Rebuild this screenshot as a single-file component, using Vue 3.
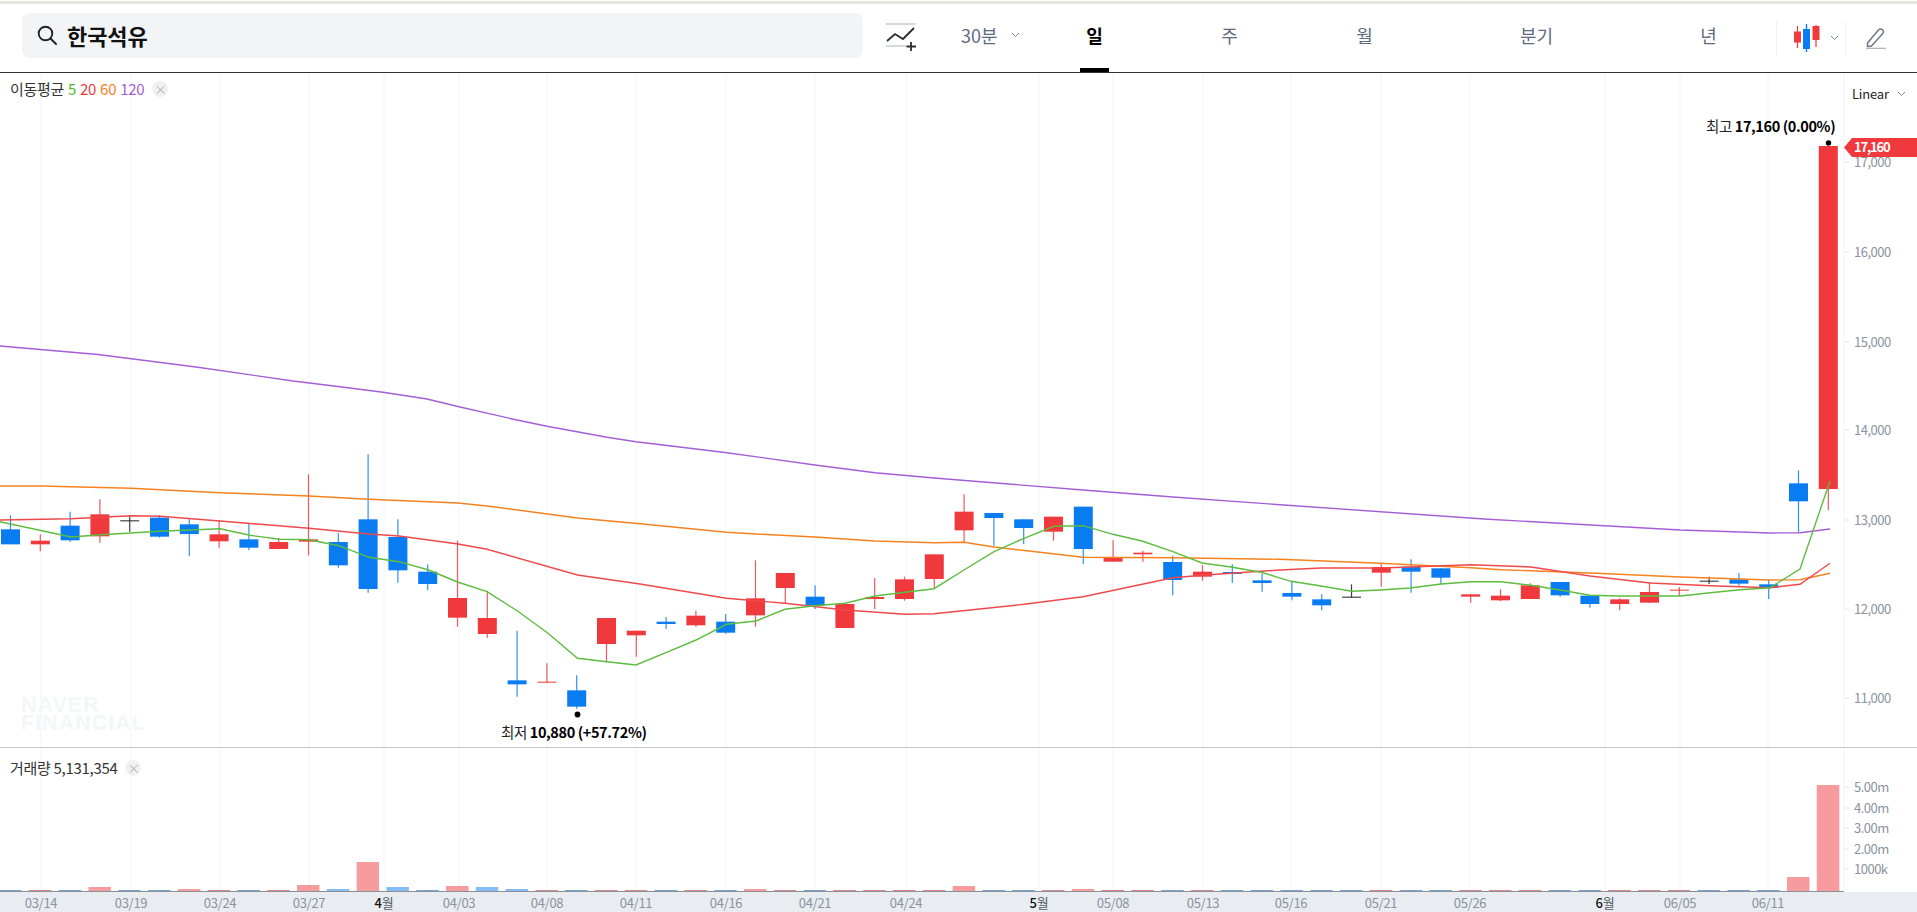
<script setup>
import { computed } from 'vue'

const tabs = [
  { label: '일', active: true },
  { label: '주' },
  { label: '월' },
  { label: '분기', wide: true },
  { label: '년' },
]

// chart is drawn in page coordinates, wick/body values come off a 3x crop starting at y=440
const toY = (v) => 440 + v / 3
const firstX = 10.5
const stepX = 29.8
const barW = 19

const rawCandles = [
  ['b', 226, 268, 313, 313], ['r', 283, 302, 313, 334], ['b', 215, 257, 301, 305], ['r', 178, 223, 289, 308],
  ['k', 228, 241, 244, 275], ['b', 226, 233, 290, 293], ['b', 238, 253, 282, 349], ['r', 241, 283, 304, 323],
  ['b', 250, 298, 323, 331], ['r', 295, 306, 327, 328], ['r', 103, 298, 305, 346], ['b', 280, 306, 376, 383],
  ['b', 43, 238, 447, 458], ['b', 238, 291, 391, 428], ['b', 373, 395, 432, 451], ['r', 302, 474, 533, 560],
  ['r', 452, 534, 582, 593], ['b', 572, 721, 733, 770], ['r', 670, 725, 728, 728], ['b', 706, 751, 800, 806],
  ['r', 534, 534, 612, 667], ['r', 572, 572, 586, 650], ['b', 531, 545, 552, 567], ['r', 512, 527, 556, 560],
  ['b', 522, 545, 578, 582], ['r', 361, 475, 526, 560], ['r', 399, 399, 444, 490], ['b', 436, 470, 497, 507],
  ['r', 492, 492, 564, 564], ['r', 414, 471, 477, 507], ['r', 410, 418, 477, 482], ['r', 343, 343, 417, 447],
  ['r', 163, 215, 271, 306], ['b', 219, 219, 234, 317], ['b', 238, 238, 264, 312], ['r', 230, 230, 275, 302],
  ['b', 200, 200, 327, 372], ['r', 301, 353, 365, 365], ['r', 332, 338, 343, 365], ['b', 347, 366, 420, 466],
  ['r', 376, 395, 410, 422], ['b', 373, 396, 402, 429], ['b', 402, 421, 429, 455], ['b', 425, 459, 470, 481],
  ['b', 463, 478, 496, 511], ['k', 433, 470, 473, 473], ['r', 372, 381, 398, 440], ['b', 358, 380, 395, 458],
  ['b', 385, 385, 413, 432], ['r', 461, 463, 470, 488], ['r', 448, 467, 481, 483], ['r', 430, 436, 477, 478],
  ['b', 425, 426, 466, 470], ['b', 465, 467, 492, 503], ['r', 475, 478, 492, 511], ['r', 427, 456, 488, 489],
  ['r', 441, 449, 452, 468], ['k', 410, 422, 425, 432], ['b', 399, 418, 431, 437], ['b', 418, 433, 443, 477],
  ['b', 91, 130, 184, 278], ['r', -882, -882, 147, 211],
]

const candles = rawCandles.map(([color, high, top, bottom, low], i) => ({
  color,
  x: firstX + i * stepX,
  high: toY(high),
  top: toY(top),
  height: Math.max((bottom - top) / 3, 1),
  low: toY(low),
}))

const volumeTops = {
  3: 887, 6: 889, 10: 885, 11: 889, 12: 862, 13: 887, 15: 886, 16: 887, 17: 889,
  25: 889, 32: 886, 36: 889, 60: 877, 61: 785,
}
// a few volume bars don't take the colour of their candle
const redVolume = [6, 12, 36, 60]
const blueVolume = [16]

const volumes = computed(() =>
  candles.map((c, i) => {
    const top = volumeTops[i]
    const big = top !== undefined
    const isRed = !blueVolume.includes(i) && (c.color === 'r' || redVolume.includes(i))
    const y = big ? top : 890
    return { x: c.x - 11.5, y, h: 891 - y, color: isRed ? '#c9555a' : '#3f7fc4', op: big ? 0 : 0.7, bigColor: isRed ? '#f03a3e' : '#0a7cf2', big }
  }).map((v) => (v.big ? { ...v, color: v.bigColor, op: 0.5 } : v))
)

const lines = [
  {
    color: '#a45fd6',
    pts: [[0, 346], [98, 354.5], [196, 367], [293, 381], [340, 386.7], [383, 392.3], [427, 399], [459, 406.7], [517, 420], [547, 426.3], [607, 437.3], [636, 441.7], [727, 452.7], [815, 465], [875, 472.7], [934, 478], [1083, 490], [1173, 497], [1280, 504.7], [1484, 519], [1680, 530], [1770, 533], [1800, 532.7], [1830, 529]],
  },
  {
    color: '#f5821f',
    pts: [[0, 486], [41, 486], [131, 488.3], [220, 492.7], [309, 496], [369, 499.3], [458, 503], [487, 506], [577.5, 518], [640, 523.7], [726.5, 532.3], [756, 534], [815, 537], [875, 541], [934, 542.7], [964, 542.3], [994, 547], [1083, 557.3], [1173, 557.7], [1280, 559.3], [1380, 563.3], [1471, 567.7], [1501, 569.7], [1590, 573], [1681, 577], [1770, 580], [1800, 579.7], [1830, 573.3]],
  },
  {
    color: '#f0494c',
    pts: [[0, 520], [71, 518.7], [131, 515.7], [160, 516.3], [220, 521], [309, 528.3], [369, 534], [399, 536], [458, 544], [487, 549.3], [577.5, 575], [640, 584], [726.5, 598.3], [785, 603.3], [845, 610], [905, 614.3], [934, 613.7], [1024, 604.3], [1083, 596.7], [1173, 577.7], [1202, 575.3], [1280, 570], [1321, 568], [1380, 568], [1410, 567], [1471, 564.7], [1531, 567], [1590, 576], [1650, 583], [1710, 585.7], [1770, 587.7], [1800, 584.3], [1830, 563.3]],
  },
  {
    color: '#5dbd3f',
    pts: [[0, 521.7], [71, 537], [101, 534.7], [160, 531.3], [220, 528.7], [250, 535.3], [280, 539.3], [309, 539.7], [339, 545.7], [369, 557.3], [399, 561.7], [428.6, 570], [457.6, 582], [487, 591.7], [517.5, 611], [548, 633.3], [577.5, 658.3], [607, 661.7], [636, 665], [666.5, 652.3], [696, 640], [726.5, 624.3], [756, 621], [785, 609.3], [815, 605.7], [845, 603.3], [875, 596], [905, 592.3], [934, 588.7], [964, 570], [994, 551.7], [1024, 538.3], [1054, 526.3], [1083, 525.7], [1113, 534.3], [1142, 541], [1173, 551.7], [1202, 563], [1231, 567], [1261, 572.3], [1291, 581.3], [1321, 586], [1352, 591.3], [1380, 590], [1410, 588], [1441, 584], [1471, 581.7], [1501, 581.7], [1531, 585.3], [1560, 590], [1590, 595.3], [1620, 596], [1650, 596], [1681, 596], [1710, 592.7], [1740, 589.7], [1770, 587.7], [1800, 569], [1830, 481]],
  },
].map((l) => ({ color: l.color, points: l.pts.map((p) => p.join(',')).join(' ') }))

const dates = [
  { x: 41, t: '03/14' }, { x: 131, t: '03/19' }, { x: 220, t: '03/24' }, { x: 309, t: '03/27' },
  { x: 384, n: '4' }, { x: 459, t: '04/03' }, { x: 547, t: '04/08' }, { x: 636, t: '04/11' },
  { x: 726, t: '04/16' }, { x: 815, t: '04/21' }, { x: 906, t: '04/24' }, { x: 1039, n: '5' },
  { x: 1113, t: '05/08' }, { x: 1203, t: '05/13' }, { x: 1291, t: '05/16' }, { x: 1381, t: '05/21' },
  { x: 1470, t: '05/26' }, { x: 1605, n: '6' }, { x: 1680, t: '06/05' }, { x: 1768, t: '06/11' },
]

const priceTicks = [
  { y: 162, t: '17,000' }, { y: 252, t: '16,000' }, { y: 342, t: '15,000' }, { y: 430, t: '14,000' },
  { y: 520, t: '13,000' }, { y: 609, t: '12,000' }, { y: 698, t: '11,000' },
]
const volumeTicks = [
  { y: 787, t: '5.00m' }, { y: 808, t: '4.00m' }, { y: 828, t: '3.00m' }, { y: 849, t: '2.00m' }, { y: 869, t: '1000k' },
]
const colorOf = { r: '#f0393d', b: '#0a7cf2', k: '#222222' }
</script>

<template>
  <div class="page">
    <div class="top-line"></div>
    <header class="toolbar">
      <div class="search">
        <svg class="search-icon" width="20" height="20" viewBox="0 0 20 20">
          <circle cx="8.5" cy="8.5" r="6.8" fill="none" stroke="#222" stroke-width="1.9" />
          <path d="M13.5 13.5 L19 19" stroke="#222" stroke-width="1.9" stroke-linecap="round" />
        </svg>
        <span class="search-name">한국석유</span>
      </div>
      <button class="icon-btn indicator-btn">
        <svg width="30" height="28" viewBox="0 0 30 28">
          <path d="M0 1 H30 M0 23 H20" stroke="#d5d8de" stroke-width="2" />
          <path d="M1 18 L9 11 L17 16 L28 5" fill="none" stroke="#2c2c2c" stroke-width="1.8" />
          <path d="M25 19 V28 M20.5 23.5 H30" stroke="#2c2c2c" stroke-width="1.8" />
        </svg>
      </button>
      <div class="interval">
        <span>30분</span>
        <svg class="chev" width="9" height="6" viewBox="0 0 9 6"><path d="M1 1 L4.5 4.5 L8 1" fill="none" stroke="#7b8494" stroke-width="1" /></svg>
      </div>
      <nav class="tabs">
        <a v-for="tab in tabs" :key="tab.label" class="tab" :class="{ active: tab.active, wide: tab.wide }">
          <span class="tab-label">{{ tab.label }}</span>
        </a>
      </nav>
      <div class="tool candle-tool">
        <svg width="27" height="28" viewBox="0 0 27 28">
          <path d="M3.5 2 V24 M22 1 V23" stroke="#f0393d" stroke-width="1.2" />
          <rect x="0" y="7.5" width="7" height="11" fill="#f0393d" />
          <rect x="18.5" y="2" width="7" height="14" fill="#f0393d" />
          <path d="M12.5 0 V28" stroke="#0a7cf2" stroke-width="1.4" />
          <rect x="9" y="5" width="7" height="20" fill="#0a7cf2" />
        </svg>
        <svg class="chev" width="9" height="6" viewBox="0 0 9 6"><path d="M1 1 L4.5 4.5 L8 1" fill="none" stroke="#7b8494" stroke-width="1" /></svg>
      </div>
      <div class="tool pencil-tool">
        <svg width="20" height="21" viewBox="0 0 20 21">
          <path d="M1.5 15 L12.5 2 Q14.5 0.3 16.5 1.8 Q18.3 3.6 16.8 5.6 L5.5 18 L1.5 18.5 Z" fill="none" stroke="#6f7683" stroke-width="1.5" stroke-linejoin="round" />
          <path d="M0 20.3 H20" stroke="#a9afb9" stroke-width="1.2" />
        </svg>
      </div>
    </header>

    <main class="chart">
      <svg class="plot" width="1917" height="839" viewBox="0 73 1917 839">
        <rect x="0" y="892" width="1917" height="20" fill="#e9ecf1" />

        <line v-for="d in dates" :key="'g' + d.x" :x1="d.x" :x2="d.x" y1="73" y2="891" stroke="#f3f4f7" />
        <line x1="1844" x2="1844" y1="73" y2="891" stroke="#f0f1f4" />
        <line x1="0" x2="1917" y1="747.5" y2="747.5" stroke="#c6c7c9" />

        <text class="watermark" x="21" y="711.5">NAVER</text>
        <text class="watermark" x="21" y="729.5">FINANCIAL</text>

        <g v-for="(c, i) in candles" :key="i">
          <line :x1="c.x" :x2="c.x" :y1="c.high" :y2="c.low" :stroke="colorOf[c.color]" stroke-width="1.2" stroke-opacity="0.85" />
          <rect :x="c.x - barW / 2" :y="c.top" :width="barW" :height="c.height" :fill="colorOf[c.color]" />
        </g>

        <polyline v-for="l in lines" :key="l.color" :points="l.points" fill="none" :stroke="l.color" stroke-width="1.4" />

        <rect v-for="(v, i) in volumes" :key="'v' + i" :x="v.x" :y="v.y" width="22.5" :height="v.h" :fill="v.color" :fill-opacity="v.op" />
        <line x1="0" x2="1844" y1="891.5" y2="891.5" stroke="#8d9096" />

        <circle cx="1828.5" cy="143" r="2.7" fill="#000" />
        <circle cx="577.5" cy="714.5" r="2.9" fill="#000" />
        <text class="note" x="1706" y="131.5">최고 <tspan class="note-bold">17,160 (0.00%)</tspan></text>
        <text class="note" x="501" y="737.5">최저 <tspan class="note-bold">10,880 (+57.72%)</tspan></text>

        <g v-for="t in priceTicks" :key="t.t">
          <line x1="1845" x2="1849" :y1="t.y" :y2="t.y" stroke="#e3e5e9" />
          <text class="tick" x="1854" :y="t.y + 4.5">{{ t.t }}</text>
        </g>
        <polygon points="1844,147.5 1852,138 1917,138 1917,157 1852,157" fill="#f0393d" />
        <text class="tick price-tag" x="1854" y="151.5">17,160</text>

        <g v-for="t in volumeTicks" :key="t.t">
          <line x1="1845" x2="1849" :y1="t.y" :y2="t.y" stroke="#e3e5e9" />
          <text class="tick" x="1854" :y="t.y + 4.5">{{ t.t }}</text>
        </g>

        <g v-for="d in dates" :key="'d' + d.x">
          <text v-if="d.t" class="date" :x="d.x" y="907.5">{{ d.t }}</text>
          <text v-else class="date month" :x="d.x" y="907.5"><tspan class="month-num">{{ d.n }}</tspan>월</text>
        </g>
      </svg>

      <div class="legend ma-legend">
        <span>이동평균</span>
        <span class="ma5">5</span>
        <span class="ma20">20</span>
        <span class="ma60">60</span>
        <span class="ma120">120</span>
        <i class="close">×</i>
      </div>
      <div class="legend vol-legend">
        <span>거래량 5,131,354</span>
        <i class="close">×</i>
      </div>
      <div class="scale-mode">
        <span>Linear</span>
        <svg class="chev" width="9" height="6" viewBox="0 0 9 6"><path d="M1 1 L4.5 4.5 L8 1" fill="none" stroke="#7b8494" stroke-width="1" /></svg>
      </div>
    </main>
  </div>
</template>

<style scoped>
.page {
  width: 1917px;
  height: 912px;
  overflow: hidden;
  display: flex;
  flex-direction: column;
  font-family: 'Noto Sans CJK KR', 'Noto Sans', sans-serif;
  color: #222;
  background: #fff;
}

.top-line {
  height: 4px;
  border-top: 1px solid #fff;
  background: #e6e9da;
  flex: none;
  box-sizing: border-box;
}

.toolbar {
  flex: none;
  height: 68px;
  display: flex;
  align-items: center;
  border-bottom: 1px solid #333;
  box-sizing: content-box;
}

.search {
  width: 841px;
  height: 45px;
  margin: 0 0 6px 22px;
  display: flex;
  align-items: center;
  background: #f3f4f6;
  border-radius: 8px;
}

.search-icon {
  margin-left: 15px;
}

.search-name {
  margin-left: 10px;
  font-size: 22px;
  font-weight: 700;
  color: #111;
  letter-spacing: -0.1px;
}

.icon-btn {
  padding: 0;
  border: 0;
  background: none;
}

.indicator-btn {
  width: 30px;
  height: 28px;
  margin: 0 0 3px 23px;
}

.interval {
  width: 66px;
  margin: 0 0 6px 45px;
  display: flex;
  align-items: center;
  gap: 13px;
  font-size: 18px;
  color: #5f6b80;
}

.tabs {
  align-self: stretch;
  display: flex;
}

.tab {
  width: 135px;
  display: flex;
  align-items: center;
  justify-content: center;
  font-size: 18px;
  color: #5f6b80;
  position: relative;
}

.tab.wide {
  width: 209px;
}

.tab-label {
  margin-bottom: 6px;
}

.tab.active {
  color: #000;
  font-weight: 700;
}

.tab.active::after {
  content: '';
  position: absolute;
  left: 53px;
  bottom: 0;
  width: 29px;
  height: 4px;
  background: #000;
}

.tool {
  height: 35px;
  display: flex;
  align-items: center;
  box-sizing: border-box;
}

.candle-tool {
  width: 70px;
  padding-left: 17px;
  gap: 9px;
  border-left: 1px solid #f2f3f5;
  border-right: 1px solid #f2f3f5;
}

.pencil-tool {
  padding-left: 20px;
}

.chart {
  flex: 1;
  position: relative;
}

.plot {
  display: block;
}

.watermark {
  font-family: 'Liberation Sans', sans-serif;
  font-size: 21.5px;
  font-weight: 700;
  letter-spacing: 1px;
  fill: #f5f6f8;
}

.note {
  font-size: 14.5px;
  letter-spacing: -0.4px;
  fill: #222;
}

.note-bold {
  font-weight: 700;
  fill: #000;
}

.tick {
  font-size: 13px;
  letter-spacing: -0.5px;
  fill: #8b93a1;
}

.price-tag {
  fill: #fff;
  font-weight: 700;
  letter-spacing: -1.2px;
}

.date {
  font-size: 13px;
  letter-spacing: -0.3px;
  text-anchor: middle;
  fill: #8b93a1;
}

.month {
  fill: #555c68;
}

.month-num {
  fill: #111;
  font-weight: 500;
}

.legend {
  position: absolute;
  left: 10px;
  display: flex;
  align-items: center;
  gap: 4px;
  font-size: 15px;
  letter-spacing: -0.3px;
  color: #333;
  line-height: 20px;
}

.ma-legend {
  top: 6px;
}

.vol-legend {
  top: 685px;
}

.ma5 {
  color: #4fb82c;
}

.ma20 {
  color: #f0393d;
}

.ma60 {
  color: #f5821f;
}

.ma120 {
  color: #a45fd6;
}

.close {
  width: 16px;
  height: 16px;
  margin-left: 4px;
  border-radius: 50%;
  background: #f1f1f2;
  color: #b5b8bd;
  font-style: normal;
  font-size: 13px;
  line-height: 15px;
  text-align: center;
}

.scale-mode {
  position: absolute;
  left: 1852px;
  top: 11px;
  display: flex;
  align-items: center;
  gap: 8px;
  font-size: 13px;
  line-height: 20px;
  letter-spacing: -0.2px;
  color: #222;
}
</style>
